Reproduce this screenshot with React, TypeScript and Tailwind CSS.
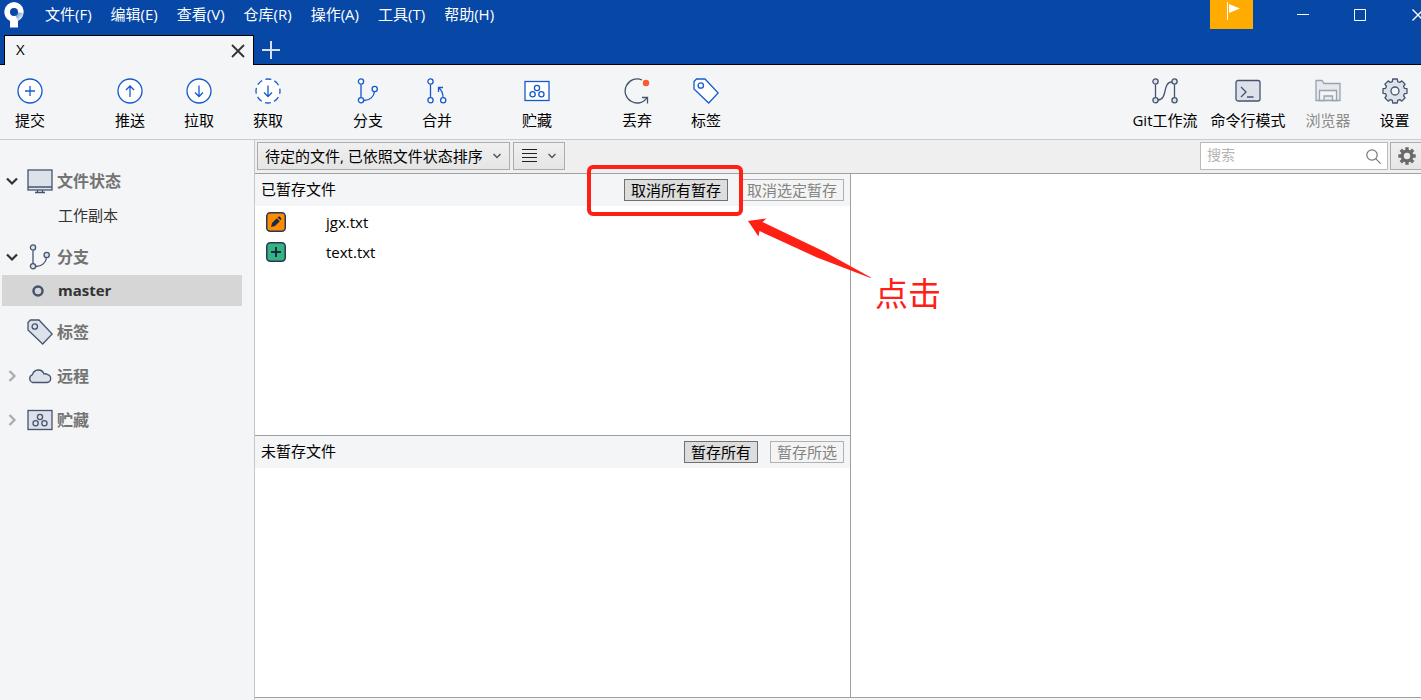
import { useState } from "react";
import type { ReactNode } from "react";

const BLUE = "#1659cf";
const SLATE = "#44546f";
const FILL = "#dde1ea";

const menus = ["文件(F)", "编辑(E)", "查看(V)", "仓库(R)", "操作(A)", "工具(T)", "帮助(H)"];

function Logo() {
  return (
    <svg width="20" height="26" viewBox="0 0 20 26" aria-hidden="true">
      <defs>
        <linearGradient id="logoShade" x1="0.2" y1="0.2" x2="0.9" y2="0.8">
          <stop offset="0" stopColor="#0747a6" stopOpacity="0.5" />
          <stop offset="1" stopColor="#0747a6" stopOpacity="0" />
        </linearGradient>
      </defs>
      <path d="M10 0a10 10 0 0 0-4 19v6.500h8V19a10 10 0 0 0-4-19zm0 6a4 4 0 1 1 0 8 4 4 0 0 1 0-8z" fill="#fff" fillRule="evenodd" />
      <path d="M14 10.500l5.800.5a10 10 0 0 1-5.800 8l-2.500-5.300a4 4 0 0 0 2.500-3.200z" fill="url(#logoShade)" />
    </svg>
  );
}

function Icon({ color, children }: { color: string; children: ReactNode }) {
  return (
    <svg width="26" height="26" viewBox="0 0 26 26" fill="none" stroke={color} strokeWidth="1.3" className="shrink-0" aria-hidden="true">
      {children}
    </svg>
  );
}

function CommitIcon() {
  return (
    <Icon color={BLUE}>
      <circle cx="13" cy="13" r="12" fill="#fff" />
      <path d="M13 8v10M8 13h10" />
    </Icon>
  );
}

function PushIcon() {
  return (
    <Icon color={BLUE}>
      <circle cx="13" cy="13" r="12" fill="#fff" />
      <path d="M13 19V8M9 12l4-4 4 4" />
    </Icon>
  );
}

function PullIcon({ dashed }: { dashed?: boolean }) {
  return (
    <Icon color={BLUE}>
      <circle cx="13" cy="13" r="12" fill="#fff" strokeDasharray={dashed ? "6 3.42" : undefined} strokeDashoffset={dashed ? 3 : undefined} />
      <path d="M13 7.500v11M9 14.500l4 4 4-4" />
    </Icon>
  );
}

function BranchIcon({ color, fill }: { color: string; fill: string }) {
  return (
    <Icon color={color}>
      <path d="M6 6.500v13M9 22.500c6 0 10-4 10.500-9" />
      <circle cx="6" cy="3.500" r="2.600" fill={fill} />
      <circle cx="6" cy="22.300" r="2.600" fill={fill} />
      <circle cx="19.700" cy="11" r="2.600" fill={fill} />
    </Icon>
  );
}

function MergeIcon() {
  return (
    <Icon color={BLUE}>
      <path d="M6.500 6.500v13M19 19.500c0-4-1-7-4-9.500M14.500 14V9.500H19" />
      <circle cx="6.500" cy="3.500" r="2.600" fill="#fff" />
      <circle cx="6.500" cy="22.300" r="2.600" fill="#fff" />
      <circle cx="19.200" cy="22.300" r="2.600" fill="#fff" />
    </Icon>
  );
}

function StashIcon({ color, fill }: { color: string; fill: string }) {
  return (
    <Icon color={color}>
      <rect x="1" y="3.500" width="24" height="19" fill={fill} />
      <circle cx="13" cy="10" r="2.600" />
      <circle cx="8.600" cy="16.200" r="2.600" />
      <circle cx="17.400" cy="16.200" r="2.600" />
    </Icon>
  );
}

function DiscardIcon() {
  return (
    <Icon color={SLATE}>
      <path d="M18 2A12 12 0 1 0 23.500 19M18 19.500h5.500v6" />
      <circle cx="22" cy="5" r="3.200" fill="#ff5630" stroke="none" />
    </Icon>
  );
}

function TagIcon({ color, fill }: { color: string; fill: string }) {
  return (
    <Icon color={color}>
      <path d="M1 3.500L3.500 1h8.500L25.200 15 15.700 25 1 11z" fill={fill} />
      <circle cx="7.800" cy="7.500" r="2.700" fill={fill} />
    </Icon>
  );
}

function GitFlowIcon() {
  return (
    <Icon color={SLATE}>
      <path d="M3.500 6.500v13M22.500 6.500v13M6 22c10 0 4-18 14-18" />
      <circle cx="3.500" cy="3.500" r="2.600" fill={FILL} />
      <circle cx="3.500" cy="22.300" r="2.600" fill={FILL} />
      <circle cx="22.500" cy="3.500" r="2.600" fill={FILL} />
      <circle cx="22.500" cy="22.300" r="2.600" fill={FILL} />
    </Icon>
  );
}

function TerminalIcon() {
  return (
    <Icon color={SLATE}>
      <rect x="1" y="2.500" width="24" height="20.500" rx="2" fill={FILL} />
      <path d="M6 9l5 5-5 5M12 19h6.500" />
    </Icon>
  );
}

function ExplorerIcon() {
  return (
    <Icon color="#98a2b3">
      <path d="M1 22.500V2.500h6l2 3h16v17z" fill="#e6e9ee" />
      <path d="M4.500 22.500V12.500h17v10h-4v-4.500h-8.500v4.500z" fill="#f4f5f7" />
    </Icon>
  );
}

// Outline of an eight-toothed cog around (13, 13)
function cogPath() {
  const steps = [
    [-16, 9.800],
    [-11, 12.200],
    [11, 12.200],
    [16, 9.800],
  ];
  const points: string[] = [];
  for (let tooth = 0; tooth < 8; tooth++) {
    for (const [offset, radius] of steps) {
      const angle = ((tooth * 45 + offset) * Math.PI) / 180;
      points.push(`${(13 + radius * Math.cos(angle)).toFixed(2)} ${(13 + radius * Math.sin(angle)).toFixed(2)}`);
    }
  }
  return `M${points.join("L")}z`;
}

function SettingsIcon() {
  return (
    <Icon color={SLATE}>
      <path d={cogPath()} fill={FILL} strokeLinejoin="round" />
      <circle cx="13" cy="13" r="4" fill="#f4f5f7" />
    </Icon>
  );
}

function MonitorIcon() {
  return (
    <Icon color={SLATE}>
      <rect x="1" y="2" width="24" height="20" fill={FILL} />
      <path d="M1 19h24M10.500 22v2M15.500 22v2M8 24.500h10" />
    </Icon>
  );
}

function CloudIcon() {
  return (
    <Icon color={SLATE}>
      <path d="M5.500 19.500h14.500a4 4 0 0 0 .5-7.900 3.500 3.500 0 0 0-3.500-.6 6 6 0 0 0-11.500.6A4.200 4.200 0 0 0 5.500 19.500z" fill={FILL} />
    </Icon>
  );
}

function Chevron({ open }: { open: boolean }) {
  return (
    <svg width="12" height="12" viewBox="0 0 12 12" fill="none" strokeWidth="2.200" stroke={open ? "#333" : "#aaa"} aria-hidden="true">
      <path d={open ? "M1 3.500l5 5 5-5" : "M3.500 1l5 5-5 5"} />
    </svg>
  );
}

function SmallChevron() {
  return (
    <svg width="8" height="6" viewBox="0 0 8 6" fill="none" stroke="#555" strokeWidth="1.500" aria-hidden="true">
      <path d="M.5 1L4 4.500 7.500 1" />
    </svg>
  );
}

function ToolButton({ icon, label, width = "w-[60px]", disabled }: { icon: ReactNode; label: string; width?: string; disabled?: boolean }) {
  return (
    <button
      disabled={disabled}
      className={`flex shrink-0 flex-col items-center gap-1.5 whitespace-nowrap leading-5 text-black disabled:text-[#8b8b8b] ${width}`}
    >
      {icon}
      <span>{label}</span>
    </button>
  );
}

function StageButton({ label, disabled }: { label: string; disabled?: boolean }) {
  return (
    <button
      disabled={disabled}
      className="flex h-[22px] items-center whitespace-nowrap border border-[#707070] bg-[#dddddd] px-1.5 leading-5 disabled:border-[#adb2b5] disabled:bg-[#f4f4f4] disabled:text-[#838383]"
    >
      {label}
    </button>
  );
}

function SideHeader({ icon, label, open, height = "h-11" }: { icon: ReactNode; label: string; open?: boolean; height?: string }) {
  return (
    <button className={`flex w-full items-center pl-1.5 text-left text-base font-semibold text-[#737373] ${height}`}>
      <span className="w-[21px]">{open !== undefined && <Chevron open={open} />}</span>
      {icon}
      <span className="ml-1">{label}</span>
    </button>
  );
}

// Red callout around the "unstage all" button
function Callout() {
  return (
    <div className="pointer-events-none absolute -left-[37px] -top-3.5 z-10 h-[51px] w-[156px] rounded-md border-4 border-[#ff2015]">
      <svg width="126" height="64" viewBox="0 0 126 64" className="absolute left-[156px] top-[49px]" aria-hidden="true">
        <path d="M1 3l18.500-2.500-4 3.500L76 33l48 26.500-.5.500L70 39.500 12.500 13l-1 5.500z" fill="#ff2015" />
      </svg>
      <span className="absolute left-[284px] top-[105px] whitespace-nowrap text-[33px] leading-[40px] text-[#ff2015]">点击</span>
    </div>
  );
}

export default function App() {
  const [search, setSearch] = useState("");

  return (
    <div className="flex h-screen flex-col overflow-hidden bg-[#f4f5f7] font-['Open_Sans','Noto_Sans_CJK_SC',sans-serif] text-[15px] text-black">
      {/* Title bar */}
      <header className="bg-[#0747a6] text-white">
        <div className="flex h-[35px] items-start">
          <div className="flex h-[30px] items-center pl-1">
            <Logo />
          </div>
          <nav className="ml-[21px] flex h-7 items-center gap-[19px]">
            {menus.map((menu) => (
              <button key={menu} className="whitespace-nowrap leading-5">
                {menu}
              </button>
            ))}
          </nav>
          <div className="ml-auto flex items-start">
            <button aria-label="通知" className="flex h-[29px] w-[43px] justify-center bg-[#ffab00] pl-1">
              <svg width="14" height="20" viewBox="0 0 14 20" fill="#fff" aria-hidden="true">
                <path d="M0 2h1v18H0zM2 4l11 4.500L2 13z" />
              </svg>
            </button>
            <button aria-label="最小化" className="ml-[21px] flex h-[29px] w-[58px] items-center justify-center">
              <svg width="12" height="12" viewBox="0 0 12 12" stroke="#fff" aria-hidden="true">
                <path d="M0 5.500h12" />
              </svg>
            </button>
            <button aria-label="最大化" className="flex h-[29px] w-14 items-center justify-center">
              <svg width="12" height="12" viewBox="0 0 12 12" fill="none" stroke="#fff" aria-hidden="true">
                <path d="M.5.5h11v11H.5z" />
              </svg>
            </button>
            <button aria-label="关闭窗口" className="flex h-[29px] w-[33px] items-center justify-end">
              <svg width="9" height="12" viewBox="0 0 9 12" stroke="#fff" strokeWidth="1.300" aria-hidden="true">
                <path d="M.5.5L11.500 11.500M11.500.5L.5 11.500" />
              </svg>
            </button>
          </div>
        </div>
        <div className="flex h-[30px]">
          <div className="w-1 border-b border-black" />
          <div className="flex w-[250px] items-center justify-between border-x border-t border-black bg-[#f4f5f7] pl-[11px] pr-2 text-black">
            <span className="pb-0.5">X</span>
            <button aria-label="关闭标签页">
              <svg width="14" height="14" viewBox="0 0 14 14" stroke="#333" strokeWidth="1.800" aria-hidden="true">
                <path d="M1 1l12 12M13 1L1 13" />
              </svg>
            </button>
          </div>
          <div className="flex flex-1 items-center border-b border-black pl-2">
            <button aria-label="新建标签页">
              <svg width="18" height="18" viewBox="0 0 18 18" stroke="#d5e0f2" strokeWidth="2" aria-hidden="true">
                <path d="M9 0v18M0 9h18" />
              </svg>
            </button>
          </div>
        </div>
      </header>

      {/* Toolbar */}
      <div className="flex h-[75px] shrink-0 items-start justify-between border-b border-[#ccc] pt-[13px]">
        <div className="flex gap-10">
          <ToolButton icon={<CommitIcon />} label="提交" />
          <div className="flex gap-[9px]">
            <ToolButton icon={<PushIcon />} label="推送" />
            <ToolButton icon={<PullIcon />} label="拉取" />
            <ToolButton icon={<PullIcon dashed />} label="获取" />
          </div>
          <div className="flex gap-[9px]">
            <ToolButton icon={<BranchIcon color={BLUE} fill="#fff" />} label="分支" />
            <ToolButton icon={<MergeIcon />} label="合并" />
          </div>
          <ToolButton icon={<StashIcon color={BLUE} fill="#fff" />} label="贮藏" />
          <div className="flex gap-[9px]">
            <ToolButton icon={<DiscardIcon />} label="丢弃" />
            <ToolButton icon={<TagIcon color={BLUE} fill="#fff" />} label="标签" />
          </div>
        </div>
        <div className="flex">
          <ToolButton icon={<GitFlowIcon />} label="Git工作流" width="w-[86px]" />
          <ToolButton icon={<TerminalIcon />} label="命令行模式" width="w-20" />
          <ToolButton icon={<ExplorerIcon />} label="浏览器" width="w-20" disabled />
          <ToolButton icon={<SettingsIcon />} label="设置" width="w-[53px]" />
        </div>
      </div>

      <div className="flex min-h-0 flex-1">
        {/* Sidebar */}
        <aside className="w-[255px] shrink-0 border-r border-[#c4c7cc] pt-[22px]">
          <SideHeader icon={<MonitorIcon />} label="文件状态" open height="h-[38px]" />
          <button className="flex h-[31px] w-full items-center pl-[58px] text-[#333]">工作副本</button>
          <div className="pt-2">
            <SideHeader icon={<BranchIcon color={SLATE} fill={FILL} />} label="分支" open height="h-9" />
          </div>
          <button className="mb-1 ml-0.5 flex h-[31px] w-60 items-center bg-[#d6d6d6] pl-[30px] font-bold text-[#333]">
            <svg width="12" height="12" viewBox="0 0 12 12" fill="none" stroke={SLATE} strokeWidth="2.500" aria-hidden="true">
              <circle cx="6" cy="6" r="4.500" />
            </svg>
            <span className="ml-3.5">master</span>
          </button>
          <SideHeader icon={<TagIcon color={SLATE} fill={FILL} />} label="标签" />
          <SideHeader icon={<CloudIcon />} label="远程" open={false} />
          <SideHeader icon={<StashIcon color={SLATE} fill={FILL} />} label="贮藏" open={false} />
        </aside>

        <main className="flex min-w-0 flex-1 flex-col">
          {/* Filter bar */}
          <div className="flex h-[34px] shrink-0 items-start border-b border-[#a0a0a0] bg-[#efefef] pl-0.5 pt-0.5">
            <div className="relative">
              <select
                aria-label="文件排序"
                className="h-7 w-[253px] appearance-none border border-[#acacac] bg-linear-to-b from-[#f0f0f0] to-[#e5e5e5] pl-[7px] leading-5"
              >
                <option>待定的文件, 已依照文件状态排序</option>
              </select>
              <span className="pointer-events-none absolute right-[9px] top-[11px]">
                <SmallChevron />
              </span>
            </div>
            <button
              aria-label="视图模式"
              className="ml-[3px] flex h-7 w-[52px] items-center justify-between border border-[#acacac] bg-linear-to-b from-[#f0f0f0] to-[#e5e5e5] px-2"
            >
              <svg width="15" height="14" viewBox="0 0 15 14" stroke="#222" aria-hidden="true">
                <path d="M0 .5h15M0 4.500h15M0 8.500h15M0 12.500h15" />
              </svg>
              <SmallChevron />
            </button>
            <div className="ml-auto flex h-7 w-[188px] items-center border border-[#bbb] bg-white px-1.5">
              <input
                type="text"
                aria-label="搜索"
                placeholder="搜索"
                value={search}
                onChange={(e) => setSearch(e.target.value)}
                className="min-w-0 flex-1 pb-0.5 text-sm outline-none placeholder:text-[#b4b4b4]"
              />
              <svg width="15" height="15" viewBox="0 0 15 15" fill="none" stroke="#777" strokeWidth="1.200" aria-hidden="true">
                <circle cx="6" cy="6" r="5.200" />
                <path d="M9.700 9.700l5 5" />
              </svg>
            </div>
            <button aria-label="选项" className="ml-0.5 flex h-7 w-[31px] items-center border border-r-0 border-[#acacac] bg-linear-to-b from-[#f0f0f0] to-[#e5e5e5] pl-[7px]">
              <svg width="18" height="18" viewBox="0 0 18 18" fill="none" stroke="#6a6a6a" aria-hidden="true">
                <circle cx="9" cy="9" r="4.800" strokeWidth="3.200" />
                <path d="M9 .3v3M9 14.700v3M.3 9h3M14.700 9h3M2.800 2.800l2.200 2.200M13 13l2.200 2.200M2.800 15.200L5 13M13 5l2.200-2.200" strokeWidth="3.400" />
              </svg>
            </button>
          </div>

          <div className="flex min-h-0 flex-1">
            <div className="flex w-[596px] flex-col border-r border-[#a0a0a0] bg-white">
              {/* Staged files */}
              <section className="flex flex-1 flex-col">
                <div className="flex h-8 items-center gap-3 bg-[#f4f5f7] px-1.5">
                  <h2 className="mr-auto pb-0.5">已暂存文件</h2>
                  <div className="relative">
                    <StageButton label="取消所有暂存" />
                    <Callout />
                  </div>
                  <StageButton label="取消选定暂存" disabled />
                </div>
                <ul className="pt-px">
                  <li className="flex h-[30px] items-center gap-10 pl-[11px]">
                    <svg width="20" height="20" viewBox="0 0 20 20" aria-hidden="true">
                      <rect x=".75" y=".75" width="18.500" height="18.500" rx="3.500" fill="#ff8b00" stroke="#253858" strokeWidth="1.500" />
                      <path d="M5 15l1-4 4.800-4.800 3 3L9 14zM11.600 5.400l1-.9c.8-.6 3.300 1.600 2.700 2.700l-.9 1z" fill="#172b4d" />
                    </svg>
                    <span>jgx.txt</span>
                  </li>
                  <li className="flex h-[30px] items-center gap-10 pl-[11px]">
                    <svg width="20" height="20" viewBox="0 0 20 20" aria-hidden="true">
                      <rect x=".75" y=".75" width="18.500" height="18.500" rx="3.500" fill="#36b37e" stroke="#253858" strokeWidth="1.500" />
                      <path d="M10 5v10M5 10h10" stroke="#172b4d" strokeWidth="2" />
                    </svg>
                    <span>text.txt</span>
                  </li>
                </ul>
              </section>

              {/* Unstaged files */}
              <section className="flex flex-1 flex-col border-t border-[#a0a0a0]">
                <div className="flex h-8 items-center gap-3 bg-[#f4f5f7] px-1.5">
                  <h2 className="mr-auto pb-0.5">未暂存文件</h2>
                  <StageButton label="暂存所有" />
                  <StageButton label="暂存所选" disabled />
                </div>
              </section>
            </div>
            <div className="flex-1 bg-white" />
          </div>
          <div className="h-[3px] shrink-0 border-t border-[#a0a0a0] bg-[#f4f5f7]" />
        </main>
      </div>
    </div>
  );
}
